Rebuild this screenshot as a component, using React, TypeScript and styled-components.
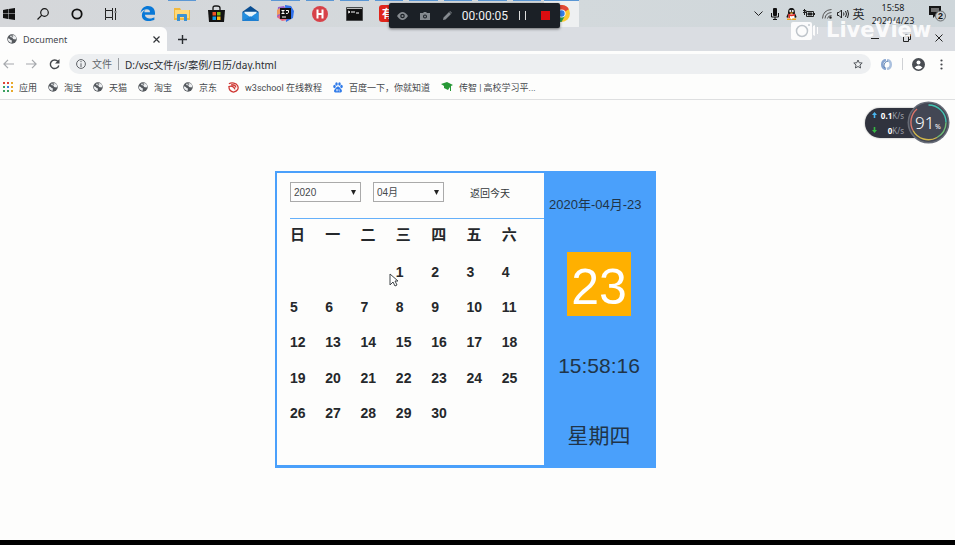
import React from "react";
import styled, { createGlobalStyle } from "styled-components";

const Global = createGlobalStyle`
  *{box-sizing:border-box}
  html,body,#root{height:100%}
  body{margin:0;background:#fdfdfc;color:#25282b;font-family:"Liberation Sans","Noto Sans CJK SC",sans-serif;overflow:hidden}
  button,select,input{font:inherit;color:inherit}
  button{border:0;background:none;padding:0;display:inline-flex;align-items:center;justify-content:center}
  svg{display:block;flex:none}
`;

const Screen = styled.div`
  position: relative;
  display: flex;
  flex-direction: column;
  min-height: 100vh;
  border-bottom: 5px solid #000;
`;

const Taskbar = styled.header`
  display: flex;
  height: 27px;
  background: linear-gradient(90deg, #d5d7da, #d3d9dc 60%, #ced6da);
`;

const StartButton = styled.button`
  width: 26px;
  justify-content: flex-start;
  padding-left: 3px;
`;

const SystemButton = styled.button`
  width: 34px;
`;

const AppStrip = styled.div`
  display: flex;
  flex: 0 0 449px;
  margin-left: 2px;
`;

const AppButton = styled.button<{ $open?: boolean; $active?: boolean }>`
  flex: 1;
  position: relative;
  background: ${(p) => (p.$active ? "#eef0f1" : "transparent")};
  &::before {
    content: "";
    position: absolute;
    top: 0;
    left: ${(p) => (p.$active ? 0 : 3)}px;
    right: ${(p) => (p.$active ? 0 : 3)}px;
    height: 1px;
    background: ${(p) => (p.$open ? "#5b97d4" : "transparent")};
  }
`;

const Tray = styled.div`
  display: flex;
  align-items: center;
  margin-left: auto;
`;

const TrayButton = styled.button<{ $w: number }>`
  width: ${(p) => p.$w}px;
  font: 12px/16px "Noto Sans CJK SC", sans-serif;
`;

const Clock = styled.div`
  width: 54px;
  text-align: center;
  font: 9px/13px "Noto Sans", sans-serif;
  color: #171a1d;
`;

const NoticeButton = styled.button`
  width: 35px;
`;

const Recorder = styled.div`
  position: absolute;
  z-index: 2;
  left: 389px;
  top: 3px;
  display: flex;
  align-items: center;
  width: 171px;
  height: 25px;
  padding-left: 8px;
  border-radius: 2px;
  background: #1b2026;
  color: #f1f2f3;
  box-shadow: 0 1px 3px #0008;
`;

const RecorderButton = styled.button<{ $w: number }>`
  width: ${(p) => p.$w}px;
`;

const Elapsed = styled.time`
  width: 62px;
  text-align: center;
  font: 12px "Roboto", sans-serif;
`;

const Tabs = styled.nav`
  display: flex;
  height: 24px;
  background: #dadde2;
`;

const Tab = styled.div`
  display: flex;
  align-items: center;
  width: 167px;
  padding: 0 6px 0 7px;
  background: #fdfdfd;
  border-radius: 0 6px 0 0;
  font: 9px "Noto Sans", sans-serif;
  color: #44484d;
`;

const TabTitle = styled.span`
  flex: 1;
  margin-left: 6px;
`;

const TabButton = styled.button`
  width: 31px;
`;

const CloseTab = styled.button`
  width: 9px;
`;

const WindowButtons = styled.div`
  display: flex;
  margin-left: auto;
`;

const WindowButton = styled.button`
  width: 32px;
  padding-bottom: 3px;
`;

const AddressRow = styled.div`
  display: flex;
  align-items: center;
  height: 26px;
`;

const NavButton = styled.button`
  width: 23px;
  padding-right: 7px;
`;

const AddressBar = styled.label`
  display: flex;
  flex: 1;
  align-items: center;
  height: 20px;
  padding: 0 8px 0 7px;
  border-radius: 10px;
  background: #edeff1;
  font: 10px "Noto Sans", "Noto Sans CJK SC", sans-serif;
  color: #62666b;
`;

const Scheme = styled.span`
  margin-left: 6px;
  padding-right: 6px;
  line-height: 12px;
  border-right: 1px solid #9a9da1;
`;

const AddressInput = styled.input`
  flex: 1;
  min-width: 0;
  margin-left: 6px;
  padding: 0;
  border: 0;
  background: none;
  color: #292c30;
`;

const BarActions = styled.div`
  display: flex;
  align-items: center;
  padding-right: 7px;
`;

const BarButton = styled.button<{ $w: number; $rule?: boolean }>`
  width: ${(p) => p.$w}px;
  height: 12px;
  border-right: ${(p) => (p.$rule ? "1px solid #cfd1d4" : "0")};
`;

const Bookmarks = styled.nav`
  display: flex;
  align-items: center;
  height: 23px;
  padding: 0 0 2px 3px;
  gap: 11px;
  border-bottom: 1px solid #dedfe0;
  font: 9px "Roboto", "Noto Sans CJK SC", sans-serif;
`;

const Bookmark = styled.a`
  display: flex;
  align-items: center;
  gap: 6px;
  color: #45484c;
  text-decoration: none;
  white-space: nowrap;
`;

const Page = styled.main`
  flex: 1;
  display: flex;
  justify-content: center;
  align-items: flex-start;
  padding: 71px 0 0 0;
  margin-right: 24px;
`;

const Calendar = styled.section`
  display: flex;
  width: 381px;
  border: 2px solid #4aa0fb;
  border-bottom-width: 3px;
`;

const MonthPanel = styled.div`
  flex: 1;
  padding-left: 13px;
`;

const Controls = styled.div`
  display: flex;
  align-items: center;
  height: 46px;
  padding-bottom: 7px;
  border-bottom: 1px solid #65b0fa;
`;

const SelectBox = styled.span`
  position: relative;
  display: flex;
  align-items: center;
  margin-right: 12px;
`;

const Select = styled.select`
  appearance: none;
  width: 71px;
  height: 20px;
  padding: 0 3px;
  border: 1px solid #aaa;
  border-radius: 0;
  background: #fdfdfd;
  font-size: 10px;
  color: #45484b;
`;

const SelectArrow = styled.svg`
  position: absolute;
  right: 5px;
  pointer-events: none;
`;

const TodayButton = styled.button`
  margin-left: 14px;
  font-size: 10px;
  color: #34373a;
`;

const Days = styled.table`
  width: 247px;
  table-layout: fixed;
  border-collapse: collapse;
  font-size: 14px;
  font-weight: 700;
  th,
  td {
    height: 35px;
    padding: 0;
    text-align: left;
  }
  th {
    padding-bottom: 3px;
    font-size: 15px;
    line-height: 20px;
  }
  tr:nth-child(3n) td {
    height: 36px;
  }
`;

const TodayPanel = styled.aside`
  display: flex;
  flex-direction: column;
  align-items: center;
  width: 110px;
  padding: 22px 0 14px 0;
  background: #4aa0fb;
  color: #203448;
`;

const DateText = styled.div`
  align-self: flex-start;
  padding-left: 5px;
  font-size: 13px;
  line-height: 20px;
  white-space: nowrap;
`;

const DayTile = styled.div`
  display: flex;
  align-items: center;
  justify-content: center;
  width: 64px;
  height: 64px;
  margin: 37px 0 36px 0;
  padding-top: 6px;
  background: #ffb000;
  font-size: 50px;
  line-height: 58px;
  color: #fff;
`;

const TimeText = styled.div`
  font-size: 21px;
  line-height: 28px;
`;

const WeekText = styled.div`
  margin-top: 41px;
  font-size: 21px;
  line-height: 30px;
`;

const Pointer = styled.svg`
  position: absolute;
  left: 389px;
  top: 273px;
`;

const Watermark = styled.div`
  position: absolute;
  left: 790px;
  top: 17px;
  display: flex;
  align-items: center;
  gap: 7px;
  font: 700 21px/26px "DejaVu Sans", sans-serif;
  color: #ffffffe6;
  pointer-events: none;
`;

const Monitor = styled.aside`
  position: absolute;
  right: 5px;
  top: 101px;
  display: flex;
  align-items: center;
  width: 85px;
  height: 43px;
`;

const Speeds = styled.div`
  width: 60px;
  height: 30px;
  padding: 0 21px 0 7px;
  border-radius: 15px 0 0 15px;
  background: #30333e;
  box-shadow: 0 0 2px #0006;
  color: #fff;
`;

const Speed = styled.div`
  display: flex;
  align-items: center;
  height: 15px;
  font: 700 8px "Noto Sans", sans-serif;
  svg {
    margin-right: auto;
  }
`;

const Unit = styled.span`
  font-weight: 400;
  color: #9b9fa8;
`;

const Gauge = styled.svg`
  position: absolute;
  right: 0;
  top: 0;
  font-family: "Noto Sans", sans-serif;
`;

const Globe = () => (
  <svg width="10" height="10" viewBox="0 0 20 20">
    <circle cx="10" cy="10" r="9.5" fill="#54585d" />
    <path d="M2 9c3 0 4 1 5 3l3 1-1 5C4 17 1 13 2 9ZM8 2l-2 4 5 1 1 3 5 1 2-3c-1-4-5-7-9-6l3 2-3 2Z" fill="#eceef0" />
  </svg>
);

const Arrow = ({ back }: { back?: boolean }) => (
  <svg width="11" height="10" viewBox="0 0 11 10" fill="none" stroke="#a5a8ac" strokeWidth="1.2">
    <path d={back ? "M11 5H1M5 .8.9 5 5 9.2" : "M0 5h10M6 .8 10.1 5 6 9.2"} />
  </svg>
);

const Folder = () => (
  <svg width="16" height="14" viewBox="0 0 16 14">
    <path d="M0 1h6l1 2h9v10H0Z" fill="#f1b93e" />
    <path d="M1 3h14v8H1Z" fill="#ffd978" />
    <path d="M3 14V8q0-1 1-1h8q1 0 1 1v6h-3v-4H6v4Z" fill="#3b91d2" />
  </svg>
);

const Edge = () => (
  <svg width="15" height="15" viewBox="0 0 24 24">
    <path d="M1 11C2 4 7 0 13 0c7 0 11 5 11 11v3H8c0 4 4 6 8 6 3 0 5-1 7-2v4c-2 1-5 2-9 2-7 0-11-4-11-9 0-4 2-7 6-9-1 1-2 2-2 4h9c0-4-2-5-5-5-4 0-8 2-10 6Z" fill="#0878d7" />
  </svg>
);

const Store = () => (
  <svg width="17" height="17" viewBox="0 0 17 17">
    <path d="M5 6V3q0-2 2-2h2q3 0 3 2v3" fill="none" stroke="#161616" strokeWidth="1.3" />
    <path d="M0 5h17l-1 12H1Z" fill="#131313" />
    <path d="M4.500 7H8v3.500H4.500Z" fill="#ee5124" />
    <path d="M9 7h3.500v3.500H9Z" fill="#7dbb19" />
    <path d="M4.500 11.500H8V15H4.500Z" fill="#129ee9" />
    <path d="M9 11.500h3.500V15H9Z" fill="#fbb914" />
  </svg>
);

const Mail = () => (
  <svg width="17" height="15" viewBox="0 0 17 16">
    <path d="M0 6 8.500 0 17 6v10H0Z" fill="#0b4f92" />
    <path d="M2 6h13v3l-6.500 4L2 9Z" fill="#e7f4fb" />
    <path d="m0 6 8.500 6L0 16Zm17 0-8.500 6 8.500 4Z" fill="#258fe0" />
    <path d="M0 16 8.500 11 17 16Z" fill="#1d7fd2" />
  </svg>
);

const Idea = () => (
  <svg width="17" height="17" viewBox="0 0 17 17">
    <path d="m1 2 6-1 4 6-6 8-5-3Z" fill="#9a62c9" />
    <path d="m8 0 6 1 3 5-1 7-7 4Z" fill="#2f70ea" />
    <path d="m0 12 5-3 5 6-5 1Z" fill="#e9657e" />
    <path d="m0 5 3-2v6l-3 1Z" fill="#f09a5d" />
    <path d="M3 3h11v11H3Z" fill="#111" />
    <path d="M4.500 5.500h3M6 5.500v3M4.500 8.500h3M9 5.500h2.500v2q0 1-2.500 1M5 12h4" fill="none" stroke="#fff" />
  </svg>
);

const HBuilder = () => (
  <svg width="16" height="16" viewBox="0 0 16 16">
    <circle cx="8" cy="8" r="8" fill="#d74249" />
    <path d="M5.500 3.500v9M10.500 3.500v9M5.500 8h5" stroke="#fff" strokeWidth="2" />
  </svg>
);

const Terminal = () => (
  <svg width="17" height="14" viewBox="0 0 17 14">
    <path d="M0 0h17v14H0Z" fill="#101010" stroke="#7e8386" />
    <path d="M1 1.500h15" stroke="#bbb" />
    <path d="m2 4 2 1-2 1M6 4v2m2-2v2m2 0h3" fill="none" stroke="#fff" />
  </svg>
);

const Dictionary = styled.span`
  width: 16px;
  height: 17px;
  margin-right: 3px;
  border-radius: 3px;
  background: #e0251b;
  color: #fff;
  font: 700 11px/16px "Noto Sans CJK SC", sans-serif;
`;

const Chrome = () => (
  <svg width="17" height="17" viewBox="0 0 20 20">
    <circle cx="10" cy="10" r="10" fill="#fac832" />
    <path d="M10 10 1.300 5A10 10 0 0 1 18.700 5Z" fill="#e24736" />
    <path d="M10 10 1.300 5A10 10 0 0 0 10 20l4-7Z" fill="#269b50" />
    <circle cx="10" cy="10" r="4.800" fill="#fff" />
    <circle cx="10" cy="10" r="3.800" fill="#347ee8" />
  </svg>
);

const apps = [
  { name: "Edge", icon: <Edge /> },
  { name: "Explorer", icon: <Folder />, open: true },
  { name: "Store", icon: <Store /> },
  { name: "Mail", icon: <Mail /> },
  { name: "IDEA", icon: <Idea />, open: true },
  { name: "HBuilder", icon: <HBuilder />, open: true },
  { name: "Terminal", icon: <Terminal />, open: true },
  { name: "Dictionary", icon: <Dictionary>有</Dictionary>, open: true },
  { name: "Editor", icon: null, open: true },
  { name: "Player", icon: null, open: true },
  { name: "Notes", icon: null, open: true },
  { name: "Recorder", icon: null, open: true },
  { name: "Chrome", icon: <Chrome />, open: true, active: true },
];

const W3 = () => (
  <svg width="11" height="11" viewBox="0 0 12 12" fill="none" stroke="#cf3834" strokeWidth="1.4">
    <path d="M1 2c3-2 8-1 9.500 2s0 6-4.500 7C3 10.500 1 8 1 5c3-1 6 0 6.500 3M3.500 3c3 0 5 1 5 3" />
  </svg>
);

const Paw = () => (
  <svg width="10" height="11" viewBox="0 0 20 22" fill="#307be9">
    <ellipse cx="3" cy="9" rx="2.500" ry="3.500" />
    <ellipse cx="7" cy="4" rx="2.500" ry="3.500" />
    <ellipse cx="13" cy="4" rx="2.500" ry="3.500" />
    <ellipse cx="17" cy="9" rx="2.500" ry="3.500" />
    <path d="M10 9c3 0 4 3 6 5 4 4 1 8-3 7H7c-4 1-7-3-3-7 2-2 3-5 6-5Z" />
    <path d="M7 14v4h2v-4m3 0v4h2" stroke="#fff" fill="none" />
  </svg>
);

const Cap = () => (
  <svg width="12" height="10" viewBox="0 0 12 10" fill="#279836">
    <path d="m0 2 6-2 6 3-2 1v5H9V5L7 8 3 6V4Z" />
  </svg>
);

const AppsGrid = () => (
  <svg width="10" height="10" viewBox="0 0 10 10">
    {["#df4438", "#df4438", "#e8a92a", "#3ca160", "#397bdc", "#e8a92a", "#3ca160", "#3ca160", "#e8a92a"].map((c, i) => (
      <rect key={i} x={(i % 3) * 4} y={Math.floor(i / 3) * 4} width="2" height="2" fill={c} />
    ))}
  </svg>
);

const bookmarks = [
  { icon: <AppsGrid />, text: "应用" },
  { icon: <Globe />, text: "淘宝" },
  { icon: <Globe />, text: "天猫" },
  { icon: <Globe />, text: "淘宝" },
  { icon: <Globe />, text: "京东" },
  { icon: <W3 />, text: "w3school 在线教程" },
  { icon: <Paw />, text: "百度一下，你就知道" },
  { icon: <Cap />, text: "传智 | 高校学习平..." },
];

const weekdays = ["日", "一", "二", "三", "四", "五", "六"];
const firstWeekday = 3;
const daysInMonth = 30;
const weeks = Array.from({ length: 5 }, (_, w) =>
  weekdays.map((_, d) => {
    const n = w * 7 + d - firstWeekday + 1;
    return n > 0 && n <= daysInMonth ? n : "";
  })
);

const Picker = ({ label, value }: { label: string; value: string }) => (
  <SelectBox>
    <Select aria-label={label} defaultValue={value}>
      <option>{value}</option>
    </Select>
    <SelectArrow width="5" height="5" viewBox="0 0 5 5">
      <path d="M0 0h5L2.500 5Z" fill="#222" />
    </SelectArrow>
  </SelectBox>
);

export default function App() {
  return (
    <Screen>
      <Global />
      <Taskbar>
        <StartButton aria-label="Start">
          <svg width="12" height="12" viewBox="0 0 12 12" fill="#111">
            <path d="m0 2 5-1v4.500H0Zm5.500-1L12 0v5.500H5.500ZM0 6h5v5l-5-1Zm5.500 0H12v6l-6.500-1Z" />
          </svg>
        </StartButton>
        <SystemButton aria-label="Search">
          <svg width="12" height="12" viewBox="0 0 12 12" fill="none" stroke="#171717" strokeWidth="1.2">
            <circle cx="7.500" cy="4.500" r="3.800" />
            <path d="M4.800 7.200.5 11.500" />
          </svg>
        </SystemButton>
        <SystemButton aria-label="Cortana">
          <svg width="12" height="12" viewBox="0 0 12 12">
            <circle cx="6" cy="6" r="4.700" fill="none" stroke="#111" strokeWidth="1.8" />
          </svg>
        </SystemButton>
        <SystemButton aria-label="Task view">
          <svg width="12" height="12" viewBox="0 0 12 12" fill="none" stroke="#222">
            <path d="M.5 0v2.500h7V0M.5 12V9.500h7V12M.5 2.500v7M7.500 2.500v7M10.500 0v3m0 2v7M9.500 4h2" />
          </svg>
        </SystemButton>
        <AppStrip>
          {apps.map((a) => (
            <AppButton key={a.name} aria-label={a.name} $open={a.open} $active={a.active}>
              {a.icon}
            </AppButton>
          ))}
        </AppStrip>
        <Tray>
          <TrayButton $w={16} aria-label="Show hidden icons">
            <svg width="9" height="6" viewBox="0 0 9 6" fill="none" stroke="#222"><path d="m.5.5 4 4 4-4" /></svg>
          </TrayButton>
          <TrayButton $w={17} aria-label="Microphone">
            <svg width="8" height="12" viewBox="0 0 8 12">
              <rect x="2" width="4" height="8" rx="1" fill="#111" />
              <path d="M.5 5v4h7V5M4 9v3M2 11.500h4" stroke="#111" fill="none" />
            </svg>
          </TrayButton>
          <TrayButton $w={17} aria-label="QQ">
            <svg width="11" height="12" viewBox="0 0 22 24">
              <path d="M4 11C4 3 6 0 11 0s7 3 7 11l3 6-1 3-3-2-2 5H7l-2-5-3 2-1-3Z" fill="#171717" />
              <ellipse cx="11" cy="17" rx="6" ry="6" fill="#fff" />
              <circle cx="8.500" cy="6" r="2" fill="#fff" />
              <circle cx="13.500" cy="6" r="2" fill="#fff" />
              <path d="M7 9h8l-4 3ZM2 21h8v3H2Zm10 0h8v3h-8Z" fill="#f3a51e" />
              <path d="M4 11q7 4 14 0v4q-6 2-10 1v4H5v-5Z" fill="#df2f28" />
            </svg>
          </TrayButton>
          <TrayButton $w={18} aria-label="Battery">
            <svg width="12" height="9" viewBox="0 0 12 9" fill="none" stroke="#222">
              <path d="M3.500 2.500h7v5h-7ZM11.500 4v2M1.500 0v6M0 1.500h3v2H0" />
              <path d="M5 4h4v2H5Z" fill="#222" />
            </svg>
          </TrayButton>
          <TrayButton $w={17} aria-label="Network">
            <svg width="10" height="10" viewBox="0 0 10 10" fill="none" stroke="#555">
              <path d="M.5 9.500Q1 1 9.500.5M3 9.500Q3.500 4 9.500 3.500M5.500 9.500Q6 6.500 9.500 6.500" />
              <circle cx="8.500" cy="8.500" r="1" fill="#222" />
            </svg>
          </TrayButton>
          <TrayButton $w={16} aria-label="Volume">
            <svg width="12" height="10" viewBox="0 0 12 10" fill="none" stroke="#222">
              <path d="M.5 3.500H2L4.500 1v8L2 6.500H.5ZM6.500 3.500q1 1.500 0 3M8.500 2q2 3 0 6M10.500 1q2 4 0 8" />
            </svg>
          </TrayButton>
          <TrayButton $w={15}>英</TrayButton>
          <Clock>15:58<br />2020/4/23</Clock>
          <NoticeButton aria-label="Notifications, 2 new">
            <svg width="17" height="17" viewBox="0 0 17 17">
              <path d="M0 1h12v9H7l-3 3v-3H0Z" fill="#151515" />
              <path d="M2 4h8M2 6h8" stroke="#ccc" />
              <circle cx="11.500" cy="11" r="5" fill="#c8cdd0" stroke="#676b6e" />
              <text x="11.500" y="14" textAnchor="middle" fontSize="9" fontWeight="700" fill="#111">2</text>
            </svg>
          </NoticeButton>
        </Tray>
      </Taskbar>

      <Tabs>
        <Tab>
          <Globe />
          <TabTitle>Document</TabTitle>
          <CloseTab aria-label="Close tab">
            <svg width="7" height="7" viewBox="0 0 7 7" stroke="#33363a" strokeWidth="1.2"><path d="m.5.5 6 6m0-6-6 6" /></svg>
          </CloseTab>
        </Tab>
        <TabButton aria-label="New tab">
          <svg width="9" height="9" viewBox="0 0 9 9" stroke="#292c30" strokeWidth="1.4"><path d="M4.500 0v9M0 4.500h9" /></svg>
        </TabButton>
        <WindowButtons>
          <WindowButton aria-label="Minimize">
            <svg width="8" height="8" viewBox="0 0 8 8" stroke="#222"><path d="M0 4.500h8" /></svg>
          </WindowButton>
          <WindowButton aria-label="Restore">
            <svg width="8" height="8" viewBox="0 0 8 8" stroke="#222" fill="none"><path d="M.5 2.500h5v5h-5ZM2.500 2V.5h5v5H6" /></svg>
          </WindowButton>
          <WindowButton aria-label="Close">
            <svg width="8" height="8" viewBox="0 0 8 8" stroke="#222"><path d="m.5.5 7 7m0-7-7 7" /></svg>
          </WindowButton>
        </WindowButtons>
      </Tabs>

      <AddressRow>
        <NavButton aria-label="Back"><Arrow back /></NavButton>
        <NavButton aria-label="Forward"><Arrow /></NavButton>
        <NavButton aria-label="Reload">
          <svg width="11" height="11" viewBox="0 0 11 11" fill="none" stroke="#44474b" strokeWidth="1.4">
            <path d="M9 2.500A4.300 4.300 0 1 0 9.800 6.500" /><path d="M10.500 0v4.500H6Z" fill="#44474b" stroke="none" />
          </svg>
        </NavButton>
        <AddressBar>
          <svg width="10" height="10" viewBox="0 0 10 10" fill="none" stroke="#5d6166">
            <circle cx="5" cy="5" r="4.400" /><path d="M5 4.300V8M5 2v1.200" />
          </svg>
          <Scheme>文件</Scheme>
          <AddressInput aria-label="Address" defaultValue="D:/vsc文件/js/案例/日历/day.html" />
          <svg width="10" height="10" viewBox="0 0 20 20" fill="none" stroke="#55595e" strokeWidth="2">
            <path d="m10 2 2.400 5.500 6 .5-4.500 4 1.300 6L10 15l-5.200 3 1.300-6L1.600 8l6-.5Z" />
          </svg>
        </AddressBar>
        <BarActions>
          <BarButton $w={32} $rule aria-label="Extension">
            <svg width="11" height="11" viewBox="0 0 11 11" fill="none" strokeWidth="2.5">
              <path d="M5 1C0 2 0 9 5 10" stroke="#88a5d0" /><path d="M6 1c5 1 5 8 0 9" stroke="#aac0de" /><path d="M4 9c-2-2-1-6 3-7" stroke="#587daf" strokeWidth="1" />
            </svg>
          </BarButton>
          <BarButton $w={31} aria-label="Profile">
            <svg width="13" height="13" viewBox="0 0 13 13">
              <circle cx="6.500" cy="6.500" r="6.500" fill="#494d52" /><circle cx="6.500" cy="4.500" r="2" fill="#fff" /><path d="M2.500 9.500q4-4 8 0-4 4-8 0" fill="#fff" />
            </svg>
          </BarButton>
          <BarButton $w={14} aria-label="Menu">
            <svg width="3" height="11" viewBox="0 0 3 11" fill="#44474b"><circle cx="1.500" cy="1.500" r="1.100" /><circle cx="1.500" cy="5.500" r="1.100" /><circle cx="1.500" cy="9.500" r="1.100" /></svg>
          </BarButton>
        </BarActions>
      </AddressRow>

      <Bookmarks>
        {bookmarks.map((b, i) => (
          <Bookmark key={i} href="#">{b.icon}{b.text}</Bookmark>
        ))}
      </Bookmarks>

      <Page>
        <Calendar>
          <MonthPanel>
            <Controls>
              <Picker label="年" value="2020" />
              <Picker label="月" value="04月" />
              <TodayButton>返回今天</TodayButton>
            </Controls>
            <Days>
              <thead><tr>{weekdays.map((d) => <th key={d} scope="col">{d}</th>)}</tr></thead>
              <tbody>
                {weeks.map((w, i) => <tr key={i}>{w.map((d, j) => <td key={j}>{d}</td>)}</tr>)}
              </tbody>
            </Days>
          </MonthPanel>
          <TodayPanel>
            <DateText>2020年-04月-23</DateText>
            <DayTile>23</DayTile>
            <TimeText>15:58:16</TimeText>
            <WeekText>星期四</WeekText>
          </TodayPanel>
        </Calendar>
      </Page>

      <Recorder>
        <RecorderButton $w={12} aria-label="Preview">
          <svg width="11" height="8" viewBox="0 0 11 8" fill="#858a8f"><path d="M0 4q5.500-8 11 0-5.500 8-11 0" /><circle cx="5.500" cy="4" r="2.300" fill="#1b2026" /><circle cx="5.500" cy="4" r="1.100" /></svg>
        </RecorderButton>
        <RecorderButton $w={32} aria-label="Snapshot">
          <svg width="10" height="8" viewBox="0 0 10 8" fill="#858a8f"><path d="M0 1h3l1-1h2l1 1h3v7H0Z" /><circle cx="5" cy="4.500" r="2" fill="#1b2026" /><circle cx="5" cy="4.500" r="1" /></svg>
        </RecorderButton>
        <RecorderButton $w={14} aria-label="Draw">
          <svg width="9" height="9" viewBox="0 0 9 9" fill="#858a8f"><path d="m0 9 .5-2.500L6 1l2 2-5.500 5.500ZM6.500.5 7 0l2 2-.5.500Z" /></svg>
        </RecorderButton>
        <Elapsed>00:00:05</Elapsed>
        <RecorderButton $w={15} aria-label="Pause">
          <svg width="7" height="9" viewBox="0 0 7 9" stroke="#ddd"><path d="M.5 0v9M6.500 0v9" /></svg>
        </RecorderButton>
        <RecorderButton $w={30} aria-label="Stop">
          <svg width="9" height="9" viewBox="0 0 9 9"><path d="M0 0h9v9H0Z" fill="#dc0d10" /></svg>
        </RecorderButton>
      </Recorder>

      <Watermark>
        <svg width="29" height="21" viewBox="0 0 29 21">
          <path d="M3 2h17q2 0 2 2v14q0 2-2 2H3q-2 0-2-2V4q0-2 2-2Zm20 4 2-1v11l-2-1ZM27 7h1v7h-1Z" fill="#fff" fillOpacity=".9" />
          <circle cx="12" cy="11" r="5.500" fill="none" stroke="#bfc5cb" strokeWidth="1.5" /><circle cx="19" cy="5" r="1" fill="#c4cbd0" />
        </svg>
        LiveView
      </Watermark>

      <Monitor>
        <Speeds>
          <Speed><svg width="5" height="6" viewBox="0 0 5 6"><path d="M2.500 0 5 3H3.300v3H1.700V3H0Z" fill="#49b6ef" /></svg>0.1<Unit>K/s</Unit></Speed>
          <Speed><svg width="5" height="6" viewBox="0 0 5 6"><path d="M2.500 6 5 3H3.300V0H1.700v3H0Z" fill="#35b841" /></svg>0<Unit>K/s</Unit></Speed>
        </Speeds>
        <Gauge width="43" height="43" viewBox="0 0 43 43">
          <circle cx="21.500" cy="21.500" r="21" fill="#666b76" /><circle cx="21.500" cy="21.500" r="19.500" fill="#434754" />
          <g fill="none" strokeWidth="1.4">
            <path d="M21.500 4A17.500 17.500 0 0 1 39 21.500" stroke="#42c6b3" /><path d="M39 21.500A17.500 17.500 0 0 1 30 36.500" stroke="#6fbd75" /><path d="M30 36.500A17.500 17.500 0 0 1 6 29.500" stroke="#d4b94a" /><path d="M6 29.500A17.500 17.500 0 0 1 10 8" stroke="#dc756a" />
          </g>
          <text x="8" y="28" fontSize="17" fontWeight="300" fill="#fff">91</text><text x="28" y="28" fontSize="7" fill="#fff">%</text>
        </Gauge>
      </Monitor>

      <Pointer width="10" height="15" viewBox="0 0 10 15"><path d="M1 1v11l3-3 2 4 2-1-2-4h3Z" fill="#fff" stroke="#41464a" /></Pointer>
    </Screen>
  );
}
